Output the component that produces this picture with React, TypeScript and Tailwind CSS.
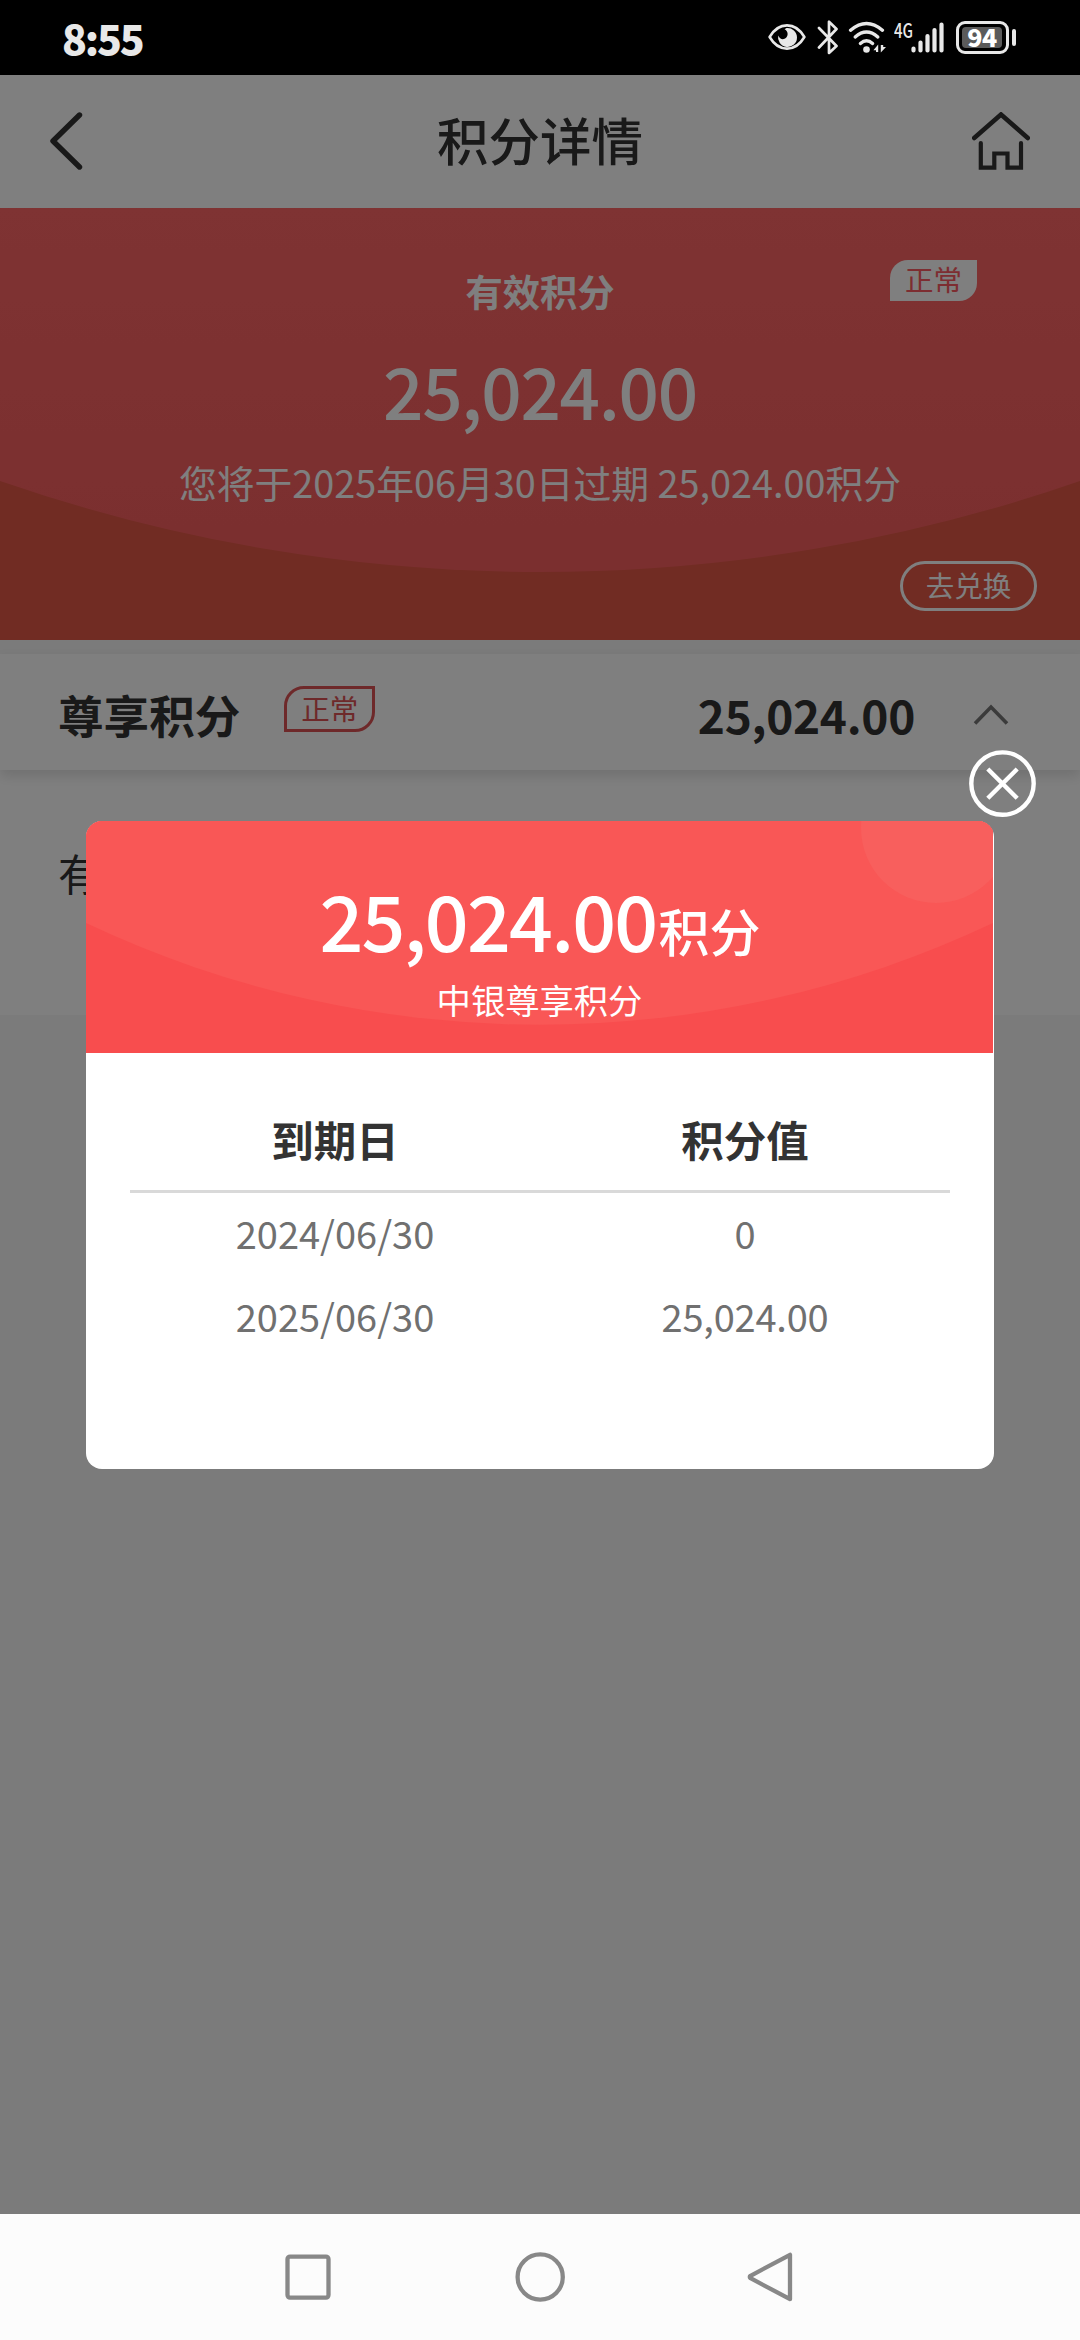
import React from "react";

const records = [
  { date: "2024/06/30", points: "0" },
  { date: "2025/06/30", points: "25,024.00" },
];

function StatusBar() {
  return (
    <div className="flex h-[75px] w-full shrink-0 items-start bg-black pl-[62px] text-[#e8e8e8]">
      <span className="mt-[12px] w-[90px] text-[41px] leading-[50px] font-black tracking-[-2.2px]">8:55</span>

      {/* Eye comfort */}
      <svg className="mt-[23px] ml-[616px] h-[28px] w-[38px] shrink-0" viewBox="0 0 38 28" fill="none">
        <path d="M1.600 14C6 6.500 12 2.400 19 2.400S32 6.500 36.400 14C32 21.500 26 25.600 19 25.600S6 21.500 1.600 14Z" stroke="currentColor" strokeWidth="2.600" strokeLinejoin="round" />
        <path d="M18.500 5A9.500 9.500 0 1 1 10.200 12.500C11.500 15.500 14 16.800 16.500 15.800C19.500 14.500 20.500 11 18.800 8.200C18.200 7.200 17.500 6.600 16.600 6.200Z" fill="currentColor" />
      </svg>

      {/* Bluetooth */}
      <svg className="mt-[20px] ml-[11px] h-[35px] w-[22px] shrink-0" viewBox="0 0 22 35" fill="none" stroke="currentColor" strokeWidth="2.700" strokeLinejoin="round" strokeLinecap="round">
        <path d="M2 27.500L19.500 9L12 1.800V33L19.500 26L2 8" />
      </svg>

      {/* Wifi */}
      <svg className="mt-[20px] ml-[9px] h-[34px] w-[40px] shrink-0" viewBox="0 0 40 34" fill="none" stroke="currentColor" strokeWidth="3.400" strokeLinecap="round">
        <path d="M2.600 10.200Q18.500-3.400 34.400 10.200" />
        <path d="M7.200 17Q18.500 7.200 29.800 17" />
        <path d="M12.400 23.400Q18.500 18 24.600 23.400" />
        <circle cx="18.500" cy="29.500" r="3.300" fill="currentColor" stroke="none" />
        <path d="M30.200 32V24.500L25.400 30.200H28V32ZM32.800 25V32.500L38 27H35.200V25Z" fill="currentColor" stroke="none" />
      </svg>

      <span className="mt-[20px] ml-[6px] w-[18px] text-[20px] leading-[20px] font-medium">
        <span className="inline-block origin-left scale-x-[0.75]">4G</span>
      </span>

      {/* Signal */}
      <svg className="mt-[22px] ml-[-1px] h-[31px] w-[34px] shrink-0" viewBox="0 0 34 31" stroke="currentColor" strokeWidth="4.200" strokeLinecap="round">
        <path d="M2.500 26.500V28.500M9.500 20.500V28.500M16.500 14V28.500M23.500 8V28.500M30.500 2.500V28.500" />
      </svg>

      {/* Battery */}
      <div className="mt-[21px] ml-[11px] flex items-center gap-[3px]">
        <div className="flex h-[33px] w-[53px] items-center rounded-[9px] border-[3px] border-[#e8e8e8] p-[3px]">
          <div className="flex h-[21px] w-[40px] items-center justify-center rounded-[4px] bg-[#5a5a5a] text-[25px] leading-[20px] font-black tracking-[-0.5px] text-white">
            <span className="-mt-[3px]">94</span>
          </div>
        </div>
        <div className="h-[17px] w-[4px] rounded-[2px] bg-[#e8e8e8]" />
      </div>
    </div>
  );
}

function Header() {
  return (
    <div className="flex h-[133px] items-center justify-between bg-white pr-[50px] pb-[2px] pl-[50px] text-[#333333]">
      <svg className="h-[58px] w-[58px]" viewBox="0 0 58 58" fill="none" stroke="currentColor" strokeWidth="5.400" strokeLinecap="round" strokeLinejoin="round">
        <path d="M29.500 3L3 29L29.500 55" />
      </svg>
      <h1 className="mb-[4px] text-[51.500px] leading-[60px] font-medium">积分详情</h1>
      <svg className="h-[58px] w-[58px]" viewBox="0 0 58 58" fill="none" stroke="currentColor" strokeWidth="4.200" strokeLinecap="round">
        <path d="M2.200 26L29 2.500L55.800 26" strokeWidth="4.600" />
        <path d="M8.800 31V55.700H22.300V41.500H35.500V55.700H49V31" />
      </svg>
    </div>
  );
}

function Summary() {
  return (
    <div className="relative flex h-[432px] flex-col items-center bg-[#e25846] text-white">
      <svg className="absolute inset-0 h-[432px] w-[1080px]" viewBox="0 0 1080 432">
        <defs>
          <linearGradient id="summary" x1="0" y1="0" x2="0" y2="1">
            <stop offset="0" stopColor="#fe6666" />
            <stop offset="1" stopColor="#f65e5e" />
          </linearGradient>
        </defs>
        <path d="M0 0H1080V273A1648 1648 0 0 1 0 273Z" fill="url(#summary)" />
      </svg>
      <div className="relative mt-[53px] text-[37.300px] leading-[60px] font-bold">有效积分</div>
      <div className="relative mt-[32px] text-[71px] leading-[72px] font-medium tracking-[-1.3px]">25,024.00</div>
      <div className="relative mt-[32px] text-[37.800px] leading-[50px] whitespace-pre">您将于2025年06月30日过期 25,024.00积分</div>
      <button className="relative mt-[54px] mr-[43px] flex h-[50px] w-[137px] items-center justify-center self-end rounded-full border-[3px] border-white text-[28.500px] leading-[40px]">
        <span className="-mt-[3px]">去兑换</span>
      </button>
      <div className="absolute top-[52px] left-[890px] flex h-[41px] w-[87px] justify-center rounded-tl-[18px] rounded-br-[18px] bg-white text-[28.500px] leading-[38px] text-[#fa5b62]">
        正常
      </div>
    </div>
  );
}

function PointsAccount() {
  return (
    <div className="mt-[14px] flex flex-col">
      <div className="relative flex h-[116px] items-center bg-white pl-[58px] text-[#333333] shadow-[0_6px_12px_rgba(0,0,0,0.12)]">
        <span className="mt-[3px] text-[45.600px] leading-[60px] font-bold">尊享积分</span>
        <span className="mb-[6px] ml-[44px] flex h-[46px] w-[91px] justify-center rounded-tl-[20px] rounded-br-[20px] border-[3px] border-[#dd5355] text-[28.500px] leading-[38px] text-[#dd5355]">
          正常
        </span>
        <span className="mt-[4px] ml-auto text-[46px] leading-[60px] font-bold tracking-[-0.3px]">25,024.00</span>
        <svg className="mt-[3px] mr-[71px] ml-[58px] h-[24px] w-[36px]" viewBox="0 0 36 24" fill="none" stroke="#777777" strokeWidth="3.600">
          <path d="M2 21.500L18 5L34 21.500" />
        </svg>
      </div>
      <div className="h-[245px] bg-white pt-[72px] pl-[58px] text-[43px] leading-[60px] text-[#333333]">有效积分</div>
    </div>
  );
}

function PointsModal() {
  return (
    <div className="absolute top-[746px] left-[86px] h-[648px] w-[908px] overflow-hidden rounded-[16px] bg-white">
      <div className="relative flex h-[232px] w-[907px] flex-col items-center bg-[#f84d4e] text-white">
        <svg className="absolute inset-0 h-[232px] w-[907px]" viewBox="0 0 907 232">
          <path d="M0 0H907V102A1061 1061 0 0 1 0 102Z" fill="#f95756" />
          <circle cx="850" cy="7" r="75" fill="#f85f5d" />
        </svg>
        <div className="relative mt-[58px] ml-[1px] flex h-[80px] items-baseline text-[77px] leading-[80px] font-medium tracking-[-1.8px]">
          25,024.00
          <span className="ml-[2px] text-[51px] tracking-normal">积分</span>
        </div>
        <div className="relative mt-[18px] text-[34.300px] leading-[44px]">中银尊享积分</div>
      </div>

      <div className="mx-[44px] mt-[56px] grid grid-cols-2 border-b-[3px] border-[#d9d9d9] pb-[21px] text-center text-[42.500px] leading-[60px] font-bold text-[#333333]">
        <span>到期日</span>
        <span>积分值</span>
      </div>
      <div className="mx-[44px] flex flex-col pt-[10px]">
        {records.map((item) => (
          <div key={item.date} className="grid grid-cols-2 text-center text-[38px] leading-[60px] text-[#707070] not-last:mb-[23px]">
            <span>{item.date}</span>
            <span className="tracking-[-0.2px]">{item.points}</span>
          </div>
        ))}
      </div>
    </div>
  );
}

function NavigationBar() {
  return (
    <div className="flex h-[126px] shrink-0 items-center justify-center gap-[180px] bg-[#fcfcfc] text-[#888888]">
      <svg className="h-[52px] w-[52px]" viewBox="0 0 52 52" fill="none" stroke="currentColor" strokeWidth="4.300">
        <rect x="5.500" y="5.600" width="41" height="41" rx="2.500" />
      </svg>
      <svg className="h-[52px] w-[52px]" viewBox="0 0 52 52" fill="none" stroke="currentColor" strokeWidth="4.300">
        <circle cx="26.200" cy="26" r="22.600" />
      </svg>
      <svg className="h-[52px] w-[52px]" viewBox="0 0 52 52" fill="none" stroke="currentColor" strokeWidth="4.300" strokeLinejoin="round">
        <path d="M44 3.800V48.200L4.500 27.200Q3 26 4.500 24.800Z" />
      </svg>
    </div>
  );
}

export default function App() {
  return (
    <div className="flex h-[2340px] w-[1080px] flex-col overflow-hidden font-['Noto_Sans_CJK_SC',sans-serif]">
      <StatusBar />
      <main className="relative flex-1 bg-[#f6f6f6]">
        <Header />
        <Summary />
        <PointsAccount />

        {/* Mask and dialog */}
        <div className="absolute inset-0 bg-black/50">
          <PointsModal />
          <svg className="absolute top-[674px] left-[967px] h-[70px] w-[70px]" viewBox="0 0 70 70" fill="none" stroke="#ffffff" strokeWidth="4.400">
            <circle cx="35.500" cy="34.600" r="31.200" />
            <path d="M20.800 20L50.200 49.200M50.200 20L20.800 49.200" />
          </svg>
        </div>
      </main>
      <NavigationBar />
    </div>
  );
}
